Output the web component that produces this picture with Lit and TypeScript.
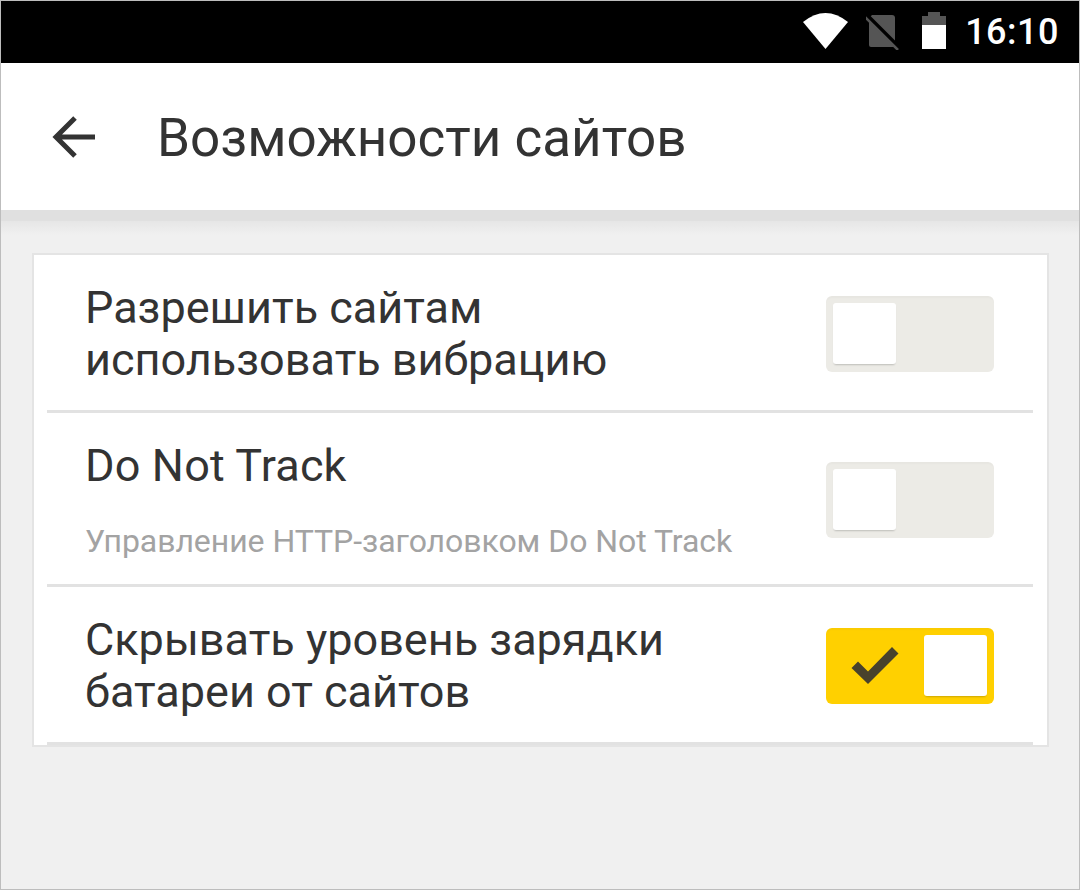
// app.ts
// Site features settings screen

import { LitElement, html, css } from 'lit';
import { customElement } from 'lit/decorators.js';

@customElement('app-toggle')
export class AppToggle extends LitElement {
  static properties = { on: { type: Boolean } };
  on = false;

  static styles = css`
    :host {
      display: block;
      flex: none;
      margin-top: 3px;
    }

    .track {
      display: flex;
      box-sizing: border-box;
      width: 168px;
      height: 76px;
      padding: 7px;
      justify-content: flex-start;
      background: #ecebe6;
      border-radius: 6px;
      box-shadow: inset 0 3px 2px -1px rgba(0, 0, 0, 0.025);
    }

    .track.on {
      justify-content: space-between;
      background: #ffd000;
    }

    .check {
      width: 50px;
      height: 40px;
      margin: 12px 0 0 18px;
    }

    .knob {
      width: 63px;
      height: 61px;
      background: #fff;
      border-radius: 3px;
      box-shadow: 0 2px 2px -1px rgba(0, 0, 0, 0.2);
    }
  `;

  render() {
    return html`
      <div class="track ${this.on ? 'on' : ''}">
        ${this.on
          ? html`<svg class="check" viewBox="0 0 50 40">
              <path d="M0.5 21 L7 14.5 L17 24.5 L41 0 L47.5 6.5 L17 37 Z" fill="#48422c"></path>
            </svg>`
          : ''}
        <div class="knob"></div>
      </div>
    `;
  }
}

@customElement('app-root')
export class AppRoot extends LitElement {
  static styles = css`
    :host {
      display: block;
      font-family: Roboto, 'Noto Sans', sans-serif;
      color: #333;
    }

    .screen {
      box-sizing: border-box;
      width: 1080px;
      height: 890px;
      display: flex;
      flex-direction: column;
      background: #f0f0f0;
      border: 1px solid #bdbdbd;
    }

    .status {
      flex: none;
      height: 62px;
      background: #000;
      display: flex;
      align-items: center;
      justify-content: flex-end;
      padding-right: 20px;
    }

    .status svg {
      display: block;
      flex: none;
      margin-bottom: 2px;
    }

    .wifi { width: 48px; height: 38px; margin-right: 18px; }
    .sim { width: 34px; height: 38px; margin-right: 22px; }
    .battery { width: 26px; height: 38px; margin-right: 17px; }

    .time {
      color: #fff;
      font-size: 36px;
      font-weight: 500;
      letter-spacing: 0.5px;
      line-height: 40px;
    }

    .bar {
      flex: none;
      height: 147px;
      background: #fff;
      display: flex;
      align-items: center;
      padding-left: 51px;
    }

    .back {
      width: 46px;
      height: 44px;
      margin-right: 59px;
      flex: none;
    }

    .title {
      font-size: 53px;
      line-height: 60px;
      margin-top: 3px;
    }

    .shade {
      flex: none;
      height: 11px;
      background: #e0e0e0;
    }

    .fade {
      flex: none;
      height: 14px;
      background: linear-gradient(#e6e6e6, #f0f0f0);
    }

    .card {
      box-sizing: border-box;
      margin: 18px 30px 0 31px;
      height: 494px;
      background: #fff;
      border: 2px solid #e4e4e4;
      padding: 0 14px 0 13px;
      display: flex;
      flex-direction: column;
    }

    .row {
      box-sizing: border-box;
      display: flex;
      align-items: center;
      justify-content: space-between;
      padding: 0 39px 0 38px;
      border-bottom: 3px solid #e2e2e2;
      flex: none;
    }

    .row.first { height: 158px; }
    .row.second { height: 174px; }
    .row.last { height: 158px; }

    .label {
      font-size: 45px;
      line-height: 52px;
      margin-top: 3px;
    }

    .second .label {
      margin-top: 2px;
      letter-spacing: 0.17px;
    }

    .hint {
      font-size: 32px;
      line-height: 36px;
      letter-spacing: -0.05px;
      color: #a3a3a3;
      margin-top: 31px;
    }
  `;

  render() {
    return html`
      <div class="screen">
        <div class="status">
          <svg class="wifi" viewBox="0 0 48 38">
            <path d="M3 10 Q25.5 -8 48 10 L25.5 37 Z" fill="#fff"></path>
          </svg>
          <svg class="sim" viewBox="0 0 34 38">
            <path d="M6 3 H26 Q29 3 29 6 V33 Q29 35 27 35 H5 Q3 35 3 33 V6 Z" fill="#555"></path>
            <path d="M1 4 L34 37" stroke="#000" stroke-width="5"></path>
            <path d="M-1 5 L32 38" stroke="#555" stroke-width="2.5"></path>
          </svg>
          <svg class="battery" viewBox="0 0 26 38">
            <path d="M6 0 H18 V4 H24 V13 H0 V4 H6 Z" fill="#555"></path>
            <rect x="0" y="13" width="24" height="24" fill="#fff"></rect>
          </svg>
          <span class="time">16:10</span>
        </div>

        <div class="bar">
          <svg class="back" viewBox="0 0 46 44">
            <path d="M43 22 H5 M23 3 L4 22 L23 41" fill="none" stroke="#333" stroke-width="5"></path>
          </svg>
          <span class="title">Возможности сайтов</span>
        </div>
        <div class="shade"></div>
        <div class="fade"></div>

        <div class="card">
          <div class="row first">
            <div class="label">Разрешить сайтам<br />использовать вибрацию</div>
            <app-toggle></app-toggle>
          </div>
          <div class="row second">
            <div>
              <div class="label">Do Not Track</div>
              <div class="hint">Управление HTTP-заголовком Do Not Track</div>
            </div>
            <app-toggle></app-toggle>
          </div>
          <div class="row last">
            <div class="label">Скрывать уровень зарядки<br />батареи от сайтов</div>
            <app-toggle on></app-toggle>
          </div>
        </div>
      </div>
    `;
  }
}
